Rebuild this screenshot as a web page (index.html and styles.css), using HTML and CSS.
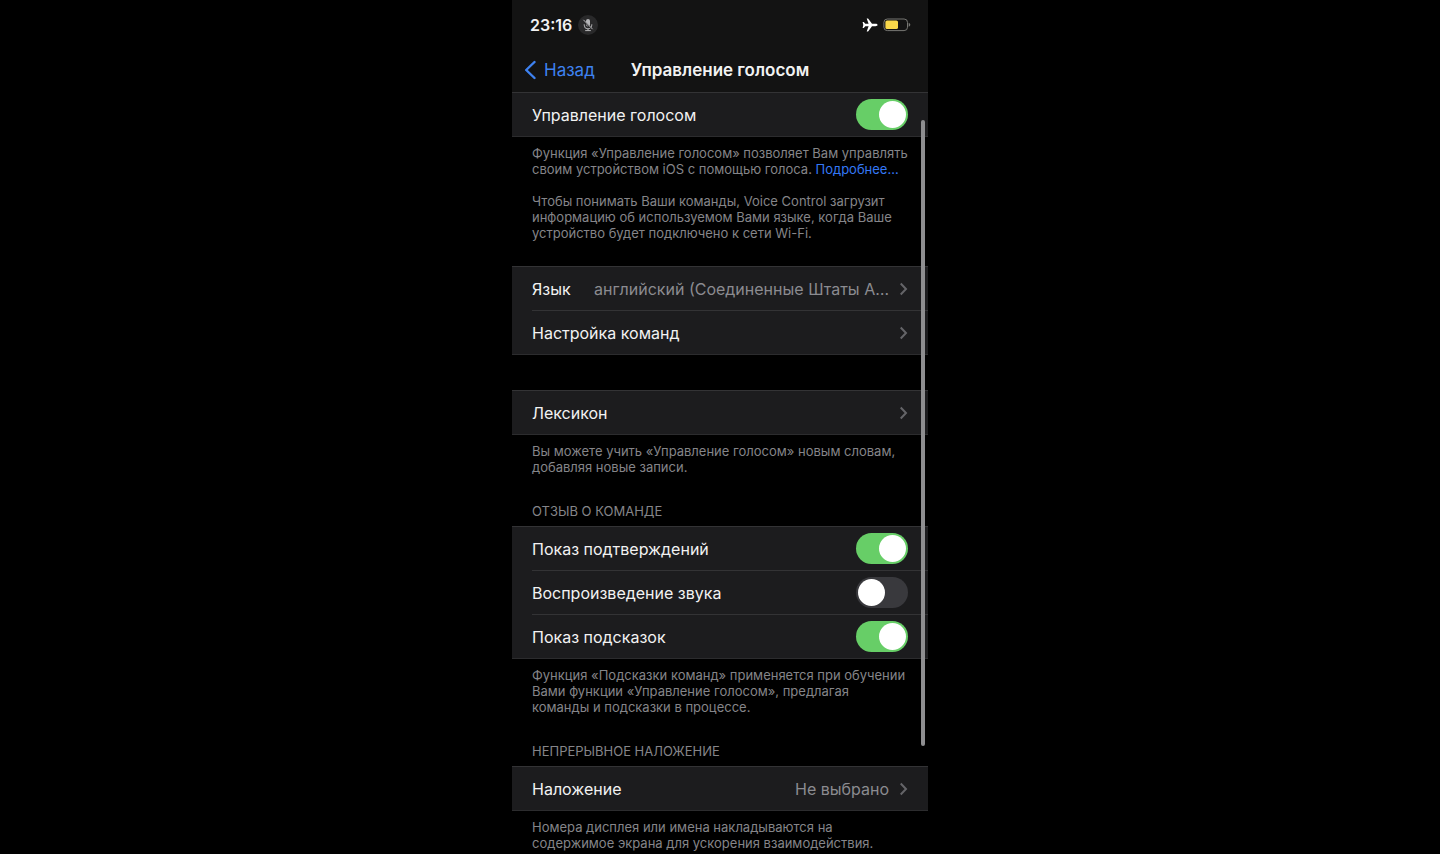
FILE: index.html
```html
<!DOCTYPE html>
<html lang="ru">
<head>
  <meta charset="UTF-8">
  <meta name="viewport" content="width=device-width, initial-scale=1.0">
  <title>Управление голосом</title>
  <link rel="stylesheet" href="styles.css">
</head>
<body>
  <div class="phone">
    <header class="header">
      <div class="status">
        <span class="time">23:16</span>
        <span class="mic">
          <svg width="14" height="14" viewBox="0 0 14 14" fill="none" stroke="#b5b5b7">
            <rect x="5" y="1" width="4" height="7.400" rx="2" fill="#b5b5b7" stroke="none"/>
            <path d="M3.200 6.300v.8a3.800 3.800 0 0 0 7.600 0v-.8M7 10.800v1.700M4.200 12.600h5.600"/>
            <path d="M2.400 2.600l9 9.200" stroke="#29292a" stroke-width="1.400"/>
            <path d="M2.400 1.800l9.200 9.400"/>
          </svg>
        </span>
        <span class="status-icons">
          <svg width="16" height="14" viewBox="0 0 16 14" fill="#fff">
            <path d="M15.6 7c0-.7-1-1.200-2.100-1.200H10L6.300.8C6.100.6 5.900.5 5.600.5h-.9l1.900 5.300H3.300L1.800 4H.6l.7 3-.7 3h1.200l1.500-1.800h3.300l-1.900 5.300h.9c.3 0 .5-.1.7-.3l3.700-5h3.500c1.100 0 2.100-.5 2.100-1.200z"/>
          </svg>
          <svg width="28" height="14" viewBox="0 0 28 14">
            <rect x=".9" y="1" width="23.600" height="11.600" rx="3.400" fill="none" stroke="#777773"/>
            <rect x="2.400" y="2.500" width="12.600" height="8.600" rx="1.600" fill="#f8d74a"/>
            <path d="M25.700 4.800c1.200.5 1.600 1.200 1.600 2s-.4 1.500-1.600 2z" fill="#777773"/>
          </svg>
        </span>
      </div>
      <nav class="nav">
        <a class="back" href="#">
          <svg width="12" height="20" viewBox="0 0 12 20" fill="none" stroke="#3e82f1" stroke-width="2.400" stroke-linecap="round" stroke-linejoin="round">
            <path d="M10.500 2L2.200 10l8.300 8"/>
          </svg>
          Назад
        </a>
        <h1 class="title">Управление голосом</h1>
      </nav>
    </header>

    <main>
      <section class="group group-first">
        <div class="list">
          <label class="row">
            <span>Управление голосом</span>
            <input class="switch" type="checkbox" checked>
          </label>
        </div>
        <p class="note">Функция «Управление голосом» позволяет Вам управлять<br>своим устройством iOS с помощью голоса. <a href="#">Подробнее…</a></p>
        <p class="note note-next">Чтобы понимать Ваши команды, Voice Control загрузит<br>информацию об используемом Вами языке, когда Ваше<br>устройство будет подключено к сети Wi-Fi.</p>
      </section>

      <section class="group group-language">
        <div class="list">
          <a class="row" href="#">
            <span>Язык</span>
            <span class="value">английский (Соединенные Штаты А…</span>
            <svg class="chevron" viewBox="0 0 8 14"><path d="M.7 1.500L6 7 .7 12.500"/></svg>
          </a>
          <a class="row" href="#">
            <span>Настройка команд</span>
            <svg class="chevron" viewBox="0 0 8 14"><path d="M.7 1.500L6 7 .7 12.500"/></svg>
          </a>
        </div>
      </section>

      <section class="group">
        <div class="list">
          <a class="row" href="#">
            <span>Лексикон</span>
            <svg class="chevron" viewBox="0 0 8 14"><path d="M.7 1.500L6 7 .7 12.500"/></svg>
          </a>
        </div>
        <p class="note">Вы можете учить «Управление голосом» новым словам,<br>добавляя новые записи.</p>
      </section>

      <section class="group">
        <h2 class="caption">ОТЗЫВ О КОМАНДЕ</h2>
        <div class="list">
          <label class="row">
            <span>Показ подтверждений</span>
            <input class="switch" type="checkbox" checked>
          </label>
          <label class="row">
            <span>Воспроизведение звука</span>
            <input class="switch" type="checkbox">
          </label>
          <label class="row">
            <span>Показ подсказок</span>
            <input class="switch" type="checkbox" checked>
          </label>
        </div>
        <p class="note">Функция «Подсказки команд» применяется при обучении<br>Вами функции «Управление голосом», предлагая<br>команды и подсказки в процессе.</p>
      </section>

      <section class="group">
        <h2 class="caption">НЕПРЕРЫВНОЕ НАЛОЖЕНИЕ</h2>
        <div class="list">
          <a class="row" href="#">
            <span>Наложение</span>
            <span class="value">Не выбрано</span>
            <svg class="chevron" viewBox="0 0 8 14"><path d="M.7 1.500L6 7 .7 12.500"/></svg>
          </a>
        </div>
        <p class="note">Номера дисплея или имена накладываются на<br>содержимое экрана для ускорения взаимодействия.</p>
      </section>
    </main>

    <div class="scrollbar"></div>
  </div>
</body>
</html>
```

FILE: styles.css
```css
* {
  box-sizing: border-box;
}

body {
  margin: 0;
  background: #000;
  color: #f2f2f2;
  font-family: Inter, "Liberation Sans", sans-serif;
  font-size: 16px;
  line-height: 22px;
}

a {
  color: #3478f6;
  text-decoration: none;
}

.phone {
  position: relative;
  max-width: 416px;
  min-height: 100vh;
  margin: 0 auto;
}

/* status bar and navigation */
.header {
  background: #131313;
}

.status {
  display: flex;
  align-items: center;
  height: 50px;
  padding: 0 17px 0 18px;
}

.time {
  font-weight: 600;
}

.mic {
  display: flex;
  align-items: center;
  justify-content: center;
  width: 20px;
  height: 20px;
  margin-left: 6px;
  border-radius: 50%;
  background: #29292a;
}

.status-icons {
  display: flex;
  gap: 5px;
  margin-left: auto;
}

.nav {
  display: grid;
  grid-template-columns: 1fr auto 1fr;
  align-items: center;
  height: 42px;
  padding: 0 12px 2px;
  font-size: 17px;
}

.back {
  display: flex;
  align-items: center;
  gap: 8px;
  color: #3e82f1;
}

.title {
  margin: 0;
  font-size: 17px;
  font-weight: 600;
}

/* groups of settings */
.group {
  padding-bottom: 28px;
}

.group-first {
  padding-bottom: 25px;
}

.group-language {
  padding-bottom: 35px;
}

.list {
  border-top: 1px solid #333335;
  border-bottom: 1px solid #2c2c2e;
  background: #1c1c1e;
}

.row {
  display: flex;
  align-items: center;
  height: 43px;
  margin-left: 20px;
  padding-right: 20px;
  color: #f2f2f2;
  white-space: nowrap;
}

.row + .row {
  height: 44px;
  border-top: 1px solid #333335;
}

.value {
  margin-left: auto;
  color: #8b8b90;
}

.chevron {
  flex: none;
  width: 8px;
  height: 14px;
  margin-left: auto;
  fill: none;
  stroke: #646468;
  stroke-width: 2;
}

.value + .chevron {
  margin-left: 11px;
}

.switch {
  appearance: none;
  flex: none;
  width: 52px;
  height: 31px;
  margin: 0 0 0 auto;
  padding: 2px;
  border-radius: 16px;
  background: #39393d;
}

.switch::before {
  content: "";
  display: block;
  width: 27px;
  height: 27px;
  border-radius: 50%;
  background: #fff;
}

.switch:checked {
  background: #67ce67;
}

.switch:checked::before {
  margin-left: auto;
}

.note {
  margin: 0;
  padding: 8px 16px 0 20px;
  color: #858589;
  font-size: 13px;
  line-height: 16px;
  white-space: nowrap;
}

.note-next {
  padding-top: 16px;
}

.caption {
  margin: 0;
  padding: 0 20px 7px;
  color: #858589;
  font-size: 13px;
  font-weight: 400;
  line-height: 16px;
}

.scrollbar {
  position: absolute;
  top: 120px;
  right: 3px;
  width: 4px;
  height: 626px;
  border-radius: 2px;
  background: #8e8e90;
}
```
